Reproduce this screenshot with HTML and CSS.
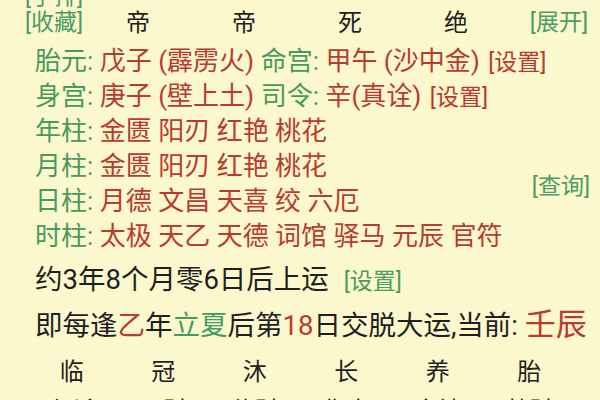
FILE: index.html
```html
<!DOCTYPE html>
<html lang="zh-CN">
<head>
<meta charset="utf-8">
<title>排盘</title>
<link rel="stylesheet" href="styles.css">
</head>
<body>
<div class="page">
  <div class="head">
    <div class="head-left">
      <span class="link">[手排]</span>
      <span class="link">[收藏]</span>
    </div>
    <span class="hc">帝</span>
    <span class="hc">帝</span>
    <span class="hc">死</span>
    <span class="hc">绝</span>
    <span class="link head-right">[展开]</span>
  </div>

  <div class="info">
    <div class="row"><span class="g">胎元:</span> <span class="r">戊子 (霹雳火)</span> <span class="g">命宫:</span> <span class="r">甲午 (沙中金)</span> <span class="r set">[设置]</span></div>
    <div class="row"><span class="g">身宫:</span> <span class="r">庚子 (壁上土)</span> <span class="g">司令:</span> <span class="r">辛(真诠)</span> <span class="r set">[设置]</span></div>
    <div class="row"><span class="g">年柱:</span> <span class="r">金匮 阳刃 红艳 桃花</span></div>
    <div class="row"><span class="g">月柱:</span> <span class="r">金匮 阳刃 红艳 桃花</span></div>
    <div class="row"><span class="g">日柱:</span> <span class="r">月德 文昌 天喜 绞 六厄</span></div>
    <div class="row"><span class="g">时柱:</span> <span class="r">太极 天乙 天德 词馆 驿马 元辰 官符</span></div>
    <div class="side"><span class="link">[查询]</span></div>
  </div>

  <div class="yun y1">约3年8个月零6日后上运 <span class="link small">[设置]</span></div>
  <div class="yun y2">即每逢<span class="r">乙</span>年<span class="g">立夏</span>后第<span class="r">18</span>日交脱大运,当前: <span class="r big">壬辰</span></div>

  <div class="grid6 g6a">
    <span>临</span><span>冠</span><span>沐</span><span>长</span><span>养</span><span>胎</span>
  </div>
  <div class="grid6 g6b">
    <span>七杀</span><span>正财</span><span>偏财</span><span>伤官</span><span>食神</span><span>劫财</span>
  </div>
</div>
</body>
</html>
```

FILE: styles.css
```css
html, body {
  margin: 0;
  padding: 0;
  background: #fbf8cd;
  overflow: hidden;
}
body {
  width: 600px;
  height: 400px;
  font-family: "Roboto", "Noto Sans CJK SC", sans-serif;
  color: #1f1f1f;
}
.page {
  margin-top: -16px;
}
.link {
  color: #4c9c64;
  font-size: 23px;
  line-height: 26px;
  white-space: nowrap;
}
.g { color: #479a5f; }
.r { color: #b93a2f; }

.head {
  display: grid;
  grid-template-columns: 85px 106px 106px 106px 106px 1fr;
  align-items: end;
}
.head-left {
  display: flex;
  flex-direction: column;
  padding-left: 25px;
}
.hc {
  text-align: center;
  font-size: 24px;
  line-height: 26px;
}
.head-right {
  text-align: right;
  padding-right: 12px;
}

.info {
  margin-top: 8px;
  display: grid;
  grid-template-columns: minmax(0, 1fr) auto;
  grid-template-rows: repeat(6, 35px);
}
.row {
  grid-column: 1;
  white-space: pre;
  padding-left: 35px;
  font-size: 26px;
  line-height: 35px;
  height: 35px;
}
.set {
  font-size: 23px;
  margin-left: 2px;
}
.side {
  grid-column: 2;
  grid-row: 4 / 6;
  align-self: center;
  padding-right: 10px;
  padding-top: 6px;
}

.yun {
  white-space: pre;
  padding-left: 35px;
  font-size: 27.5px;
}
.y1 { margin-top: 4px; height: 44px; line-height: 44px; }
.y2 { height: 45px; line-height: 45px; }
.small { margin-left: 8px; }
.big { font-size: 31px; }

.grid6 {
  display: grid;
  grid-template-columns: repeat(6, 91.5px);
  padding-left: 26px;
  align-items: center;
  font-size: 24px;
}
.grid6 span { text-align: center; }
.g6a { height: 44px; }
.g6b { height: 26px; }
```
